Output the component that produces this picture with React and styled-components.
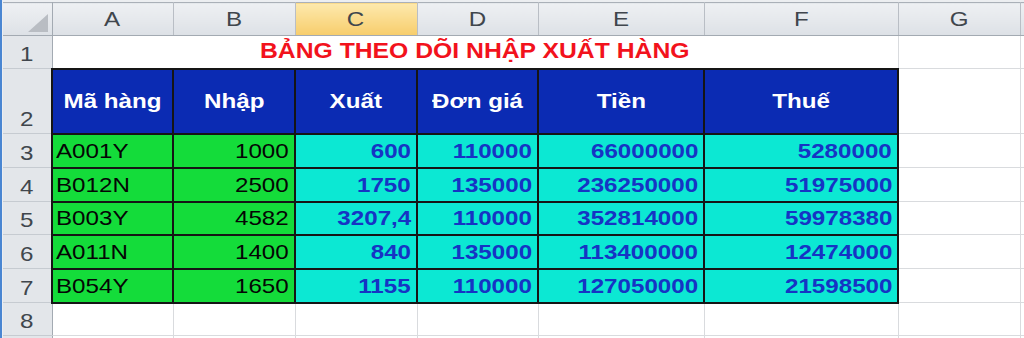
import React from 'react';
import styled, { createGlobalStyle, css } from 'styled-components';

const Global = createGlobalStyle`
  html, body { margin: 0; padding: 0; background: #ffffff; }
  body { font-family: "Liberation Sans", Arial, sans-serif; }
`;

/* Spreadsheet window: blue frame edge on the left, thin strip on top */
const Frame = styled.div`
  width: 1024px;
  height: 338px;
  overflow: hidden;
  box-sizing: border-box;
  border-left: 2px solid #4a86d2;
  padding-left: 1px;
  padding-top: 2px;
  background: #eceef1;
`;

const Sheet = styled.table`
  border-collapse: collapse;
  table-layout: fixed;
  width: 1021px;
  background: #ffffff;
`;

const Row = styled.tr`
  height: ${p => p.$h}px;
`;

/* Glyphs in this sheet are drawn a little wider than the font's own metrics */
const Txt = styled.span`
  display: inline-block;
  transform: scaleX(1.15);
  transform-origin: ${p => p.$origin || 'center'} center;
`;

const Corner = styled.th`
  padding: 0;
  background: linear-gradient(#eef0f3, #dde1e6);
  border-top: 1px solid #aab0b8;
  border-right: 1px solid #a3aab2;
  border-bottom: 1px solid #a3aab2;
`;

const CornerInner = styled.div`
  display: flex;
  justify-content: flex-end;
  align-items: flex-end;
  height: 32px;
`;

const SelectAll = styled.div`
  width: 0;
  height: 0;
  border-left: 20px solid transparent;
  border-bottom: 18px solid #b9bdc3;
  margin: 0 4px 3px 0;
`;

const ColHead = styled.th`
  padding: 0;
  font-weight: normal;
  font-size: 21px;
  color: #40464d;
  text-align: center;
  vertical-align: middle;
  background: ${p =>
    p.$active
      ? 'linear-gradient(#fde9ad, #f7cd6c)'
      : 'linear-gradient(#eef0f3, #dde1e6)'};
  border-top: 1px solid #aab0b8;
  border-right: 1px solid #b9bec5;
  border-bottom: 1px solid #a3aab2;
`;

const RowHead = styled.th`
  padding: 0 0 2px 0;
  font-weight: normal;
  font-size: 21px;
  color: #40464d;
  text-align: center;
  vertical-align: bottom;
  background: #e3e6ea;
  border-right: 1px solid #a3aab2;
  border-bottom: 1px solid #c6cbd1;
`;

const tableBorder = css`
  border: 2px solid #151515;
`;

const kinds = {
  blank: css``,
  title: css`
    text-align: center;
    color: #f2121c;
    font-weight: bold;
    font-size: 21.5px;
    padding: 0;
  `,
  head: css`
    ${tableBorder};
    background: #0b2bb3;
    color: #ffffff;
    font-weight: bold;
    text-align: center;
    padding: 0;
  `,
  code: css`
    ${tableBorder};
    background: #14dc3a;
    color: #050505;
    text-align: left;
  `,
  qty: css`
    ${tableBorder};
    background: #14dc3a;
    color: #050505;
    text-align: right;
  `,
  calc: css`
    ${tableBorder};
    background: #0ce8d3;
    color: #1634c4;
    font-weight: bold;
    text-align: right;
  `,
};

const Cell = styled.td`
  padding: 0 5px 0 3px;
  font-size: 21px;
  white-space: nowrap;
  overflow: visible;
  vertical-align: middle;
  border-right: 1px solid #d9dbde;
  border-bottom: 1px solid #d9dbde;
  ${p => kinds[p.$kind || 'blank']};
`;

const columns = [
  { key: 'A', w: 121 },
  { key: 'B', w: 122 },
  { key: 'C', w: 122, active: true },
  { key: 'D', w: 121 },
  { key: 'E', w: 166 },
  { key: 'F', w: 194 },
  { key: 'G', w: 122 },
];

const headers = ['Mã hàng', 'Nhập', 'Xuất', 'Đơn giá', 'Tiền', 'Thuế'];

const records = [
  ['A001Y', '1000', '600', '110000', '66000000', '5280000'],
  ['B012N', '2500', '1750', '135000', '236250000', '51975000'],
  ['B003Y', '4582', '3207,4', '110000', '352814000', '59978380'],
  ['A011N', '1400', '840', '135000', '113400000', '12474000'],
  ['B054Y', '1650', '1155', '110000', '127050000', '21598500'],
];

const recordHeights = [34, 34, 33, 34, 34];

const originFor = kind =>
  kind === 'code' ? 'left' : kind === 'qty' || kind === 'calc' ? 'right' : 'center';

function DataCell({ kind, children }) {
  return (
    <Cell $kind={kind}>
      <Txt $origin={originFor(kind)}>{children}</Txt>
    </Cell>
  );
}

export default function App() {
  return (
    <>
      <Global />
      <Frame>
        <Sheet>
          <colgroup>
            <col style={{ width: 49 }} />
            {columns.map(c => (
              <col key={c.key} style={{ width: c.w }} />
            ))}
            <col style={{ width: 4 }} />
          </colgroup>
          <tbody>
            <Row $h={33}>
              <Corner>
                <CornerInner>
                  <SelectAll />
                </CornerInner>
              </Corner>
              {columns.map(c => (
                <ColHead key={c.key} $active={c.active}>
                  <Txt>{c.key}</Txt>
                </ColHead>
              ))}
              <ColHead />
            </Row>

            <Row $h={33}>
              <RowHead><Txt>1</Txt></RowHead>
              <Cell $kind="title" colSpan={6}>
                <Txt>BẢNG THEO DÕI NHẬP XUẤT HÀNG</Txt>
              </Cell>
              <Cell />
              <Cell />
            </Row>

            <Row $h={65}>
              <RowHead><Txt>2</Txt></RowHead>
              {headers.map(h => (
                <DataCell key={h} kind="head">{h}</DataCell>
              ))}
              <Cell />
              <Cell />
            </Row>

            {records.map((r, i) => (
              <Row key={r[0]} $h={recordHeights[i]}>
                <RowHead><Txt>{i + 3}</Txt></RowHead>
                <DataCell kind="code">{r[0]}</DataCell>
                <DataCell kind="qty">{r[1]}</DataCell>
                {r.slice(2).map((v, j) => (
                  <DataCell key={j} kind="calc">{v}</DataCell>
                ))}
                <Cell />
                <Cell />
              </Row>
            ))}

            <Row $h={33}>
              <RowHead><Txt>8</Txt></RowHead>
              {columns.map(c => (
                <Cell key={c.key} />
              ))}
              <Cell />
            </Row>
            {/* next row, only its top sliver is in view */}
            <Row $h={20}>
              <RowHead />
              {columns.map(c => (
                <Cell key={c.key} />
              ))}
              <Cell />
            </Row>
          </tbody>
        </Sheet>
      </Frame>
    </>
  );
}
